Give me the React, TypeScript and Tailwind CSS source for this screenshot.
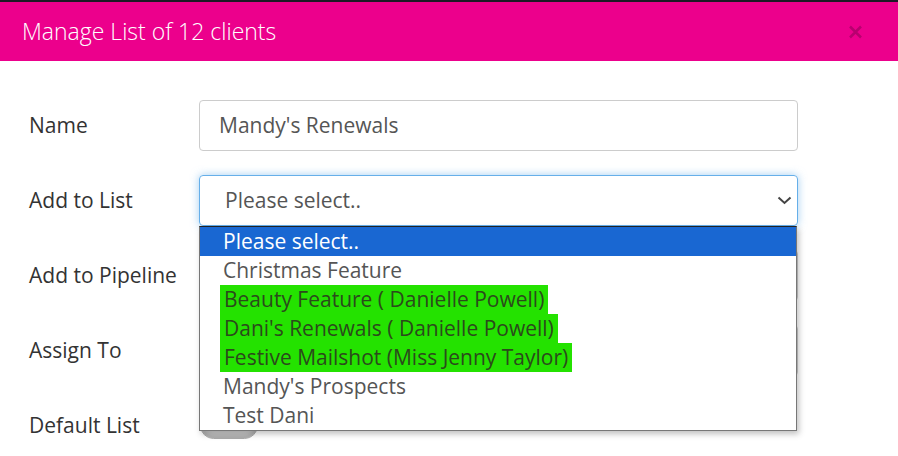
import type { ReactNode } from 'react';

const options = [
  { label: 'Please select..', selected: true },
  { label: 'Christmas Feature' },
  { label: 'Beauty Feature ( Danielle Powell)', marked: true },
  { label: "Dani's Renewals ( Danielle Powell)", marked: true },
  { label: 'Festive Mailshot (Miss Jenny Taylor)', marked: true },
  { label: "Mandy's Prospects" },
  { label: 'Test Dani' },
];

function Row({ label, children, className = '' }: { label: string; children: ReactNode; className?: string }) {
  return (
    <div className={`flex items-center ${className}`}>
      <label className="w-[170px] shrink-0 text-[21px] text-[#333]">{label}</label>
      <div className="relative w-[599px]">{children}</div>
    </div>
  );
}

function Chevron() {
  return (
    <svg width="15" height="9" viewBox="0 0 15 9" className="absolute right-[6px] top-[21px]">
      <path d="M1.5 1.5 L7.5 7 L13.5 1.5" fill="none" stroke="#444" strokeWidth="2" />
    </svg>
  );
}

export default function App() {
  return (
    <div className="w-[898px] h-[456px] overflow-hidden bg-white font-['Open_Sans',sans-serif]">
      <div className="h-[2px] bg-[#1c1a24]" />
      <div className="h-[59px] bg-[#ec008c] flex items-center justify-between pl-[22px] pr-[35px]">
        <h4 className="text-[23px] font-light text-white leading-none">Manage List of 12 clients</h4>
        <svg width="15" height="16" viewBox="0 0 15 16">
          <path d="M2 2.5 L13 13.5 M13 2.5 L2 13.5" stroke="#b8006f" strokeWidth="2.5" />
        </svg>
      </div>

      <div className="pt-[39px] pl-[29px] flex flex-col gap-[24px]">
        <Row label="Name">
          <div className="h-[51px] rounded-[4px] border border-[#ccc] flex items-center pl-[19px] text-[21px] text-[#555]">
            Mandy's Renewals
          </div>
        </Row>

        <Row label="Add to List">
          <div className="h-[51px] rounded-[4px] border border-[#66afe9] shadow-[0_0_8px_rgba(102,175,233,0.6)] flex items-center pl-[25px] text-[21px] text-[#555]">
            Please select..
          </div>
          <Chevron />
          <div className="absolute z-10 left-0 top-[51px] w-[598px] bg-white border border-[#777] border-t-[#222] shadow-[2px_3px_6px_rgba(0,0,0,0.25)]">
            {options.map(o => (
              <div
                key={o.label}
                className={`h-[29px] flex items-center pl-[23px] text-[21px] whitespace-nowrap ${
                  o.selected ? 'bg-[#1967d2] text-white' : o.marked ? 'text-[#2b4a1c]' : 'text-[#555]'
                }`}
              >
                {o.marked ? (
                  <span className="-ml-[3px] px-[4px] h-full flex items-center bg-[#24e200]">{o.label}</span>
                ) : (
                  o.label
                )}
              </div>
            ))}
          </div>
        </Row>

        <Row label="Add to Pipeline">
          <div className="h-[51px] rounded-[4px] border border-[#ccc]" />
        </Row>

        <Row label="Assign To">
          <div className="h-[51px] rounded-[4px] border border-[#ccc]" />
        </Row>

        <Row label="Default List" className="mt-[10px]">
          <div className="w-[58px] h-[27px] ml-[1px] rounded-full bg-[#d4d4d4] border border-[#aaa] shadow-[inset_0_-3px_4px_rgba(0,0,0,0.2)]" />
        </Row>
      </div>
    </div>
  );
}
